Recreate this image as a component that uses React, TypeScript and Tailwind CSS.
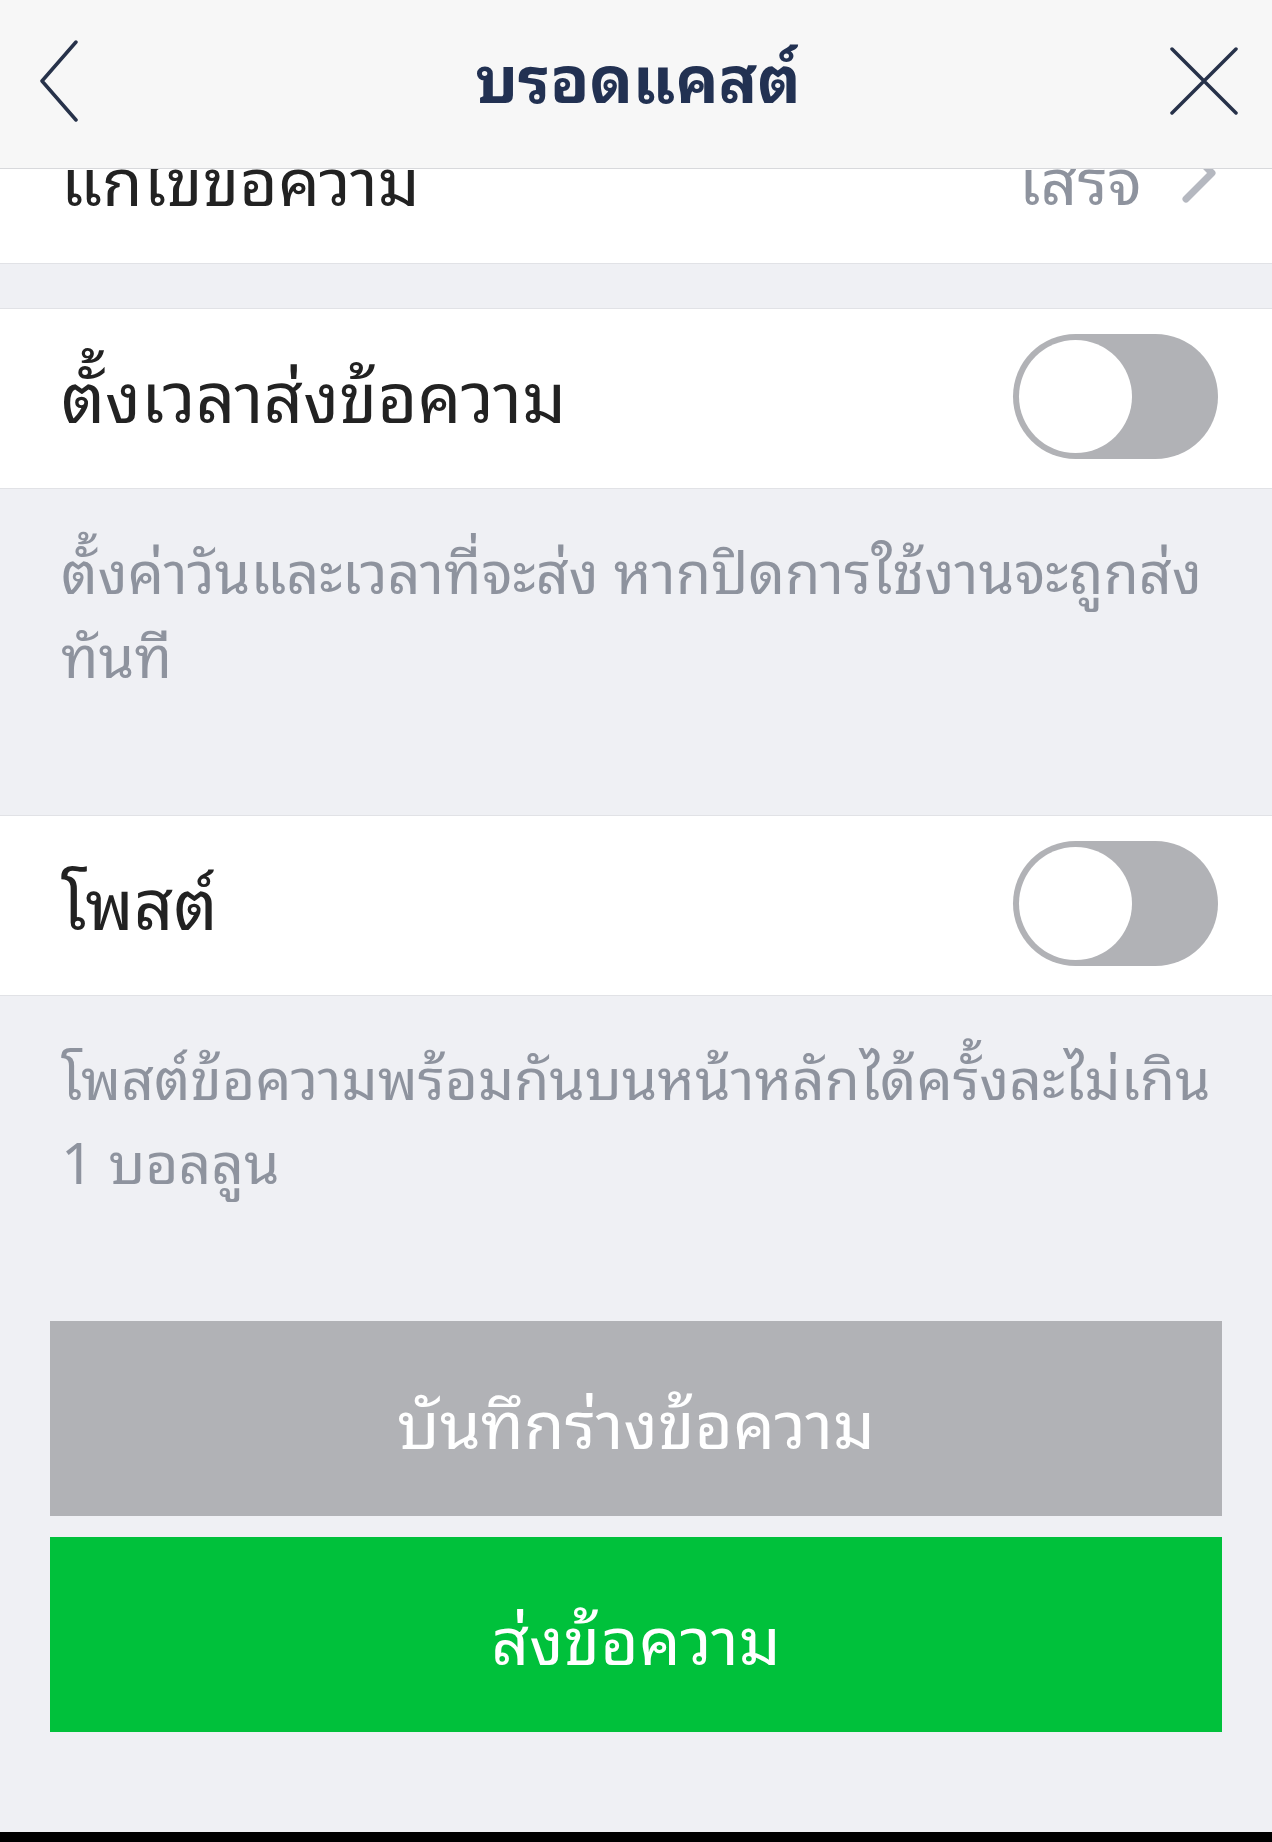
import React from "react";

function Toggle() {
  return (
    <div className="w-[205px] h-[125px] rounded-full bg-[#b1b2b6] p-[6px] flex items-center mb-[4px]">
      <div className="w-[113px] h-[113px] rounded-full bg-white" />
    </div>
  );
}

function ToggleRow({ label }: { label: string }) {
  return (
    <div className="h-[181px] shrink-0 bg-white border-y border-[#e1e2e6] flex items-center justify-between pl-[61px] pr-[54px]">
      <span className="text-[69px] leading-none text-[#222222] -translate-y-[6px]">{label}</span>
      <Toggle />
    </div>
  );
}

export default function App() {
  return (
    <div className="w-[1272px] h-[1842px] bg-[#eff0f4] flex flex-col overflow-hidden font-['Noto_Sans_Thai_Looped','Noto_Sans_Thai',sans-serif]">
      <header className="h-[169px] shrink-0 bg-[#f7f7f7] border-b border-[#d8d9dc] grid grid-cols-[1fr_auto_1fr] items-center pl-[38px] pr-[34px] relative z-10">
        <svg width="42" height="82" viewBox="0 0 42 82" fill="none" className="-mt-[6px]">
          <path d="M38 2 L4 41 L38 80" stroke="#27324a" strokeWidth="3.5" strokeLinecap="round" strokeLinejoin="round" />
        </svg>
        <div className="text-[64px] font-bold text-[#223152] leading-none -translate-y-[10px]">บรอดแคสต์</div>
        <svg width="68" height="68" viewBox="0 0 68 68" fill="none" className="-mt-[6px] justify-self-end">
          <path d="M2 2 L66 66 M66 2 L2 66" stroke="#27324a" strokeWidth="3.5" strokeLinecap="round" />
        </svg>
      </header>

      <div className="h-[95px] shrink-0 overflow-hidden bg-white border-b border-[#e1e2e6]">
        <div className="-mt-[87px] h-[181px] flex items-center justify-between pl-[61px] pr-[56px]">
          <span className="text-[66px] leading-none text-[#222222] translate-y-[3px]">แก้ไขข้อความ</span>
          <div className="flex items-center gap-[40px]">
            <span className="text-[64px] leading-none text-[#8e939e] translate-y-[3px]">เสร็จ</span>
            <svg width="34" height="60" viewBox="0 0 34 60" fill="none">
              <path d="M4 4 L30 30 L4 56" stroke="#b5b8c0" strokeWidth="7" strokeLinecap="round" strokeLinejoin="round" />
            </svg>
          </div>
        </div>
      </div>

      <div className="h-[44px] shrink-0" />

      <ToggleRow label="ตั้งเวลาส่งข้อความ" />

      <div className="h-[326px] shrink-0 pl-[61px] pr-[40px] pt-[37px] text-[57.5px] leading-[84px] text-[#8e939e] whitespace-nowrap">
        ตั้งค่าวันและเวลาที่จะส่ง หากปิดการใช้งานจะถูกส่ง
        <br />
        ทันที
      </div>

      <ToggleRow label="โพสต์" />

      <div className="h-[325px] shrink-0 pl-[61px] pr-[40px] pt-[37px] text-[57px] leading-[84px] text-[#8e939e] whitespace-nowrap">
        โพสต์ข้อความพร้อมกันบนหน้าหลักได้ครั้งละไม่เกิน
        <br />
        1 บอลลูน
      </div>

      <div className="px-[50px] flex flex-col gap-[21px]">
        <button className="h-[195px] w-full bg-[#b1b2b6] text-white text-[66px] leading-none flex items-center justify-center">
          บันทึกร่างข้อความ
        </button>
        <button className="h-[195px] w-full bg-[#00c13b] text-white text-[66px] leading-none flex items-center justify-center">
          ส่งข้อความ
        </button>
      </div>

      <div className="flex-1" />
      <div className="h-[10px] shrink-0 bg-black" />
    </div>
  );
}
